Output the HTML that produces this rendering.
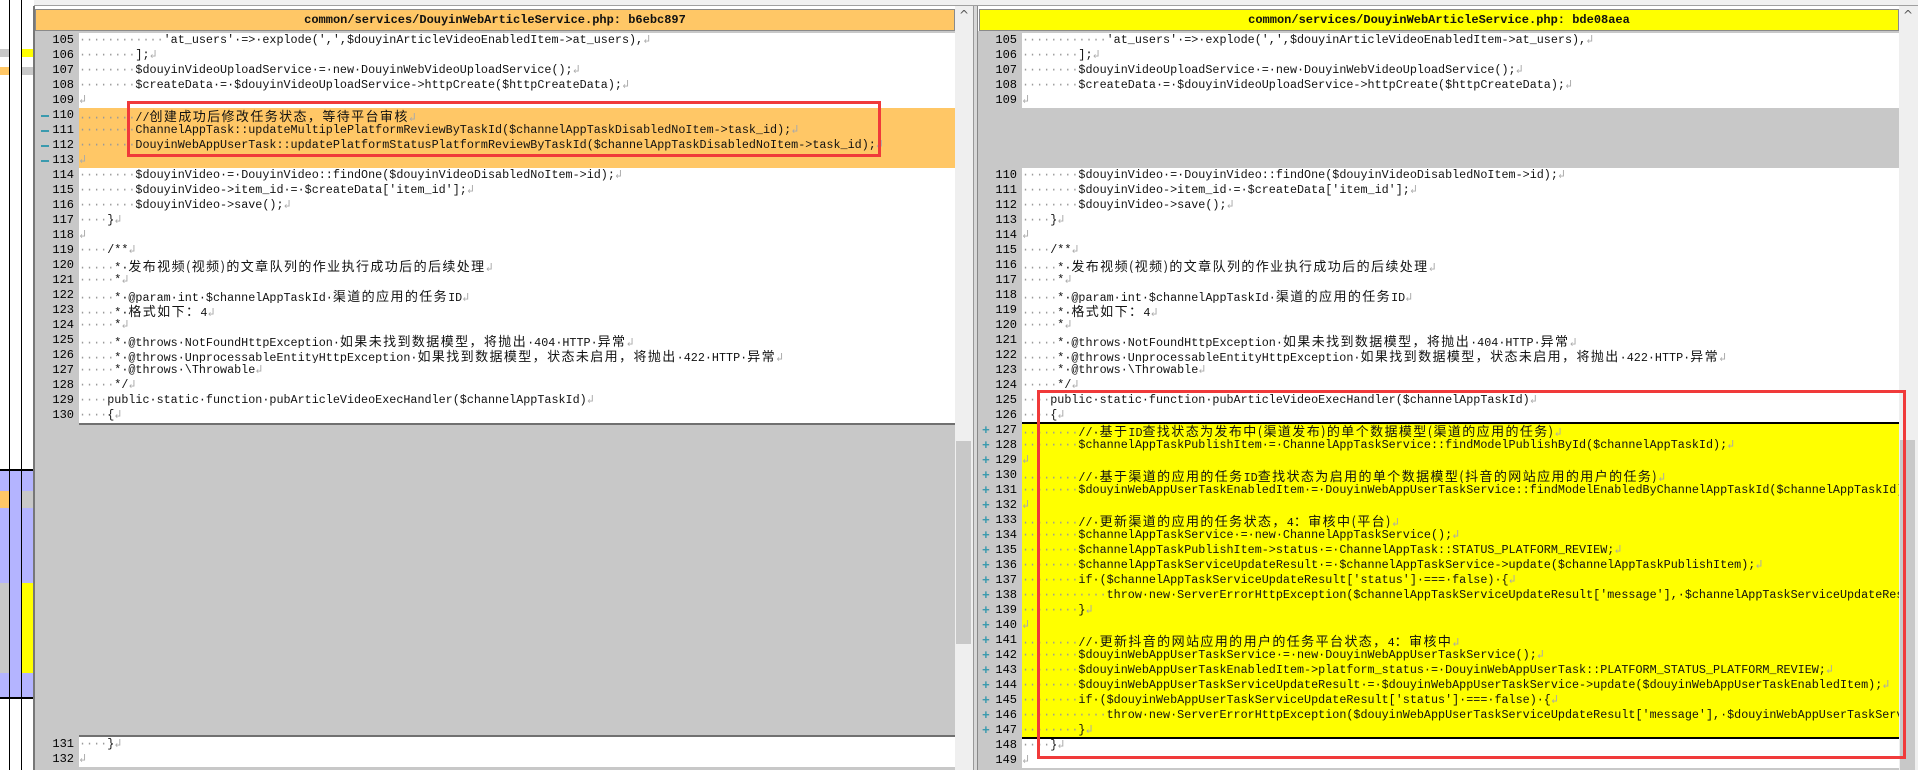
<!DOCTYPE html>
<html><head><meta charset="utf-8">
<style>
*{margin:0;padding:0;box-sizing:border-box}
body{width:1918px;height:770px;overflow:hidden;background:#fff;position:relative;font-family:"Liberation Mono","Noto Sans CJK SC",monospace;font-size:11.75px;color:#111}
.abs{position:absolute}
.pane{position:absolute;top:31px;bottom:0;overflow:hidden;background:#c8c8c8}
.r{height:15px;line-height:15px;white-space:pre;position:relative;display:flex}
.r b{font-weight:normal;width:44px;flex:none;text-align:right;padding-right:5px;background:#c8c8c8;color:#000;position:relative;font-size:12px}
.r span{flex:1;background:#fff;overflow:hidden}
.r.o span{background:#ffc766}
.r.y span{background:#ffff00}
.r.m b::before{content:"";position:absolute;left:6px;top:7px;width:8px;height:2px;background:#3a9aae}
.r.p b::before{content:"+";position:absolute;left:4px;top:0;color:#3a9aae;font-weight:bold;font-size:13px}
i{font-style:normal;color:#9a9a9a}
u{text-decoration:none;color:#aaa}
k{font-size:13px;letter-spacing:1.4px;font-family:"Noto Sans CJK SC","Liberation Mono",sans-serif}
.hdr{position:absolute;top:9px;height:22px;line-height:20px;text-align:center;font-weight:bold;font-size:12px;border:1px solid #8a8a8a}
</style></head><body>
<div class="abs" style="left:0;top:0;width:1918px;height:6px;background:#f0f0f0;border-bottom:1px solid #a0a0a0"></div>
<div class="abs" style="left:0;top:0;width:34px;height:770px;background:#fff"></div>
<div class="abs" style="left:0;top:49px;width:9px;height:8px;background:#c8c8c8"></div>
<div class="abs" style="left:21px;top:49px;width:12px;height:8px;background:#ffff00"></div>
<div class="abs" style="left:0;top:67px;width:9px;height:8px;background:#ffc766"></div>
<div class="abs" style="left:21px;top:67px;width:12px;height:8px;background:#c8c8c8"></div>
<div class="abs" style="left:0;top:470px;width:34px;height:228px;background:#b4b4ff"></div>
<div class="abs" style="left:0;top:491px;width:9px;height:17px;background:#ffc766"></div>
<div class="abs" style="left:21px;top:491px;width:12px;height:17px;background:#c8c8c8"></div>
<div class="abs" style="left:0;top:583px;width:9px;height:90px;background:#c8c8c8"></div>
<div class="abs" style="left:21px;top:583px;width:12px;height:90px;background:#ffff00"></div>
<div class="abs" style="left:0;top:469px;width:33px;height:2px;background:#000"></div>
<div class="abs" style="left:0;top:697px;width:33px;height:2px;background:#000"></div>
<div class="abs" style="left:9px;top:0;width:1px;height:770px;background:#000"></div>
<div class="abs" style="left:21px;top:0;width:1px;height:770px;background:#000"></div>
<div class="abs" style="left:33px;top:6px;width:2px;height:764px;background:#777"></div>

<div class="hdr" style="left:35px;width:920px;background:#ffc766">common/services/DouyinWebArticleService.php: b6ebc897</div>

<div class="pane" style="left:35px;width:920px;padding-top:2px">
<div class="r"><b>105</b><span><i>············</i>'at_users'·=>·explode(',',$douyinArticleVideoEnabledItem->at_users),<u>↲</u></span></div>
<div class="r"><b>106</b><span><i>········</i>];<u>↲</u></span></div>
<div class="r"><b>107</b><span><i>········</i>$douyinVideoUploadService·=·new·DouyinWebVideoUploadService();<u>↲</u></span></div>
<div class="r"><b>108</b><span><i>········</i>$createData·=·$douyinVideoUploadService->httpCreate($httpCreateData);<u>↲</u></span></div>
<div class="r"><b>109</b><span><u>↲</u></span></div>
<div class="r o m"><b>110</b><span><i>········</i>//<k>创建成功后修改任务状态，等待平台审核</k><u>↲</u></span></div>
<div class="r o m"><b>111</b><span><i>········</i>ChannelAppTask::updateMultiplePlatformReviewByTaskId($channelAppTaskDisabledNoItem->task_id);<u>↲</u></span></div>
<div class="r o m"><b>112</b><span><i>········</i>DouyinWebAppUserTask::updatePlatformStatusPlatformReviewByTaskId($channelAppTaskDisabledNoItem->task_id);<u>↲</u></span></div>
<div class="r o m"><b>113</b><span><u>↲</u></span></div>
<div class="r"><b>114</b><span><i>········</i>$douyinVideo·=·DouyinVideo::findOne($douyinVideoDisabledNoItem->id);<u>↲</u></span></div>
<div class="r"><b>115</b><span><i>········</i>$douyinVideo->item_id·=·$createData['item_id'];<u>↲</u></span></div>
<div class="r"><b>116</b><span><i>········</i>$douyinVideo->save();<u>↲</u></span></div>
<div class="r"><b>117</b><span><i>····</i>}<u>↲</u></span></div>
<div class="r"><b>118</b><span><u>↲</u></span></div>
<div class="r"><b>119</b><span><i>····</i>/**<u>↲</u></span></div>
<div class="r"><b>120</b><span><i>·····</i>*·<k>发布视频(视频)的文章队列的作业执行成功后的后续处理</k><u>↲</u></span></div>
<div class="r"><b>121</b><span><i>·····</i>*<u>↲</u></span></div>
<div class="r"><b>122</b><span><i>·····</i>*·@param·int·$channelAppTaskId·<k>渠道的应用的任务</k>ID<u>↲</u></span></div>
<div class="r"><b>123</b><span><i>·····</i>*·<k>格式如下：</k>4<u>↲</u></span></div>
<div class="r"><b>124</b><span><i>·····</i>*<u>↲</u></span></div>
<div class="r"><b>125</b><span><i>·····</i>*·@throws·NotFoundHttpException·<k>如果未找到数据模型，将抛出</k>·404·HTTP·<k>异常</k><u>↲</u></span></div>
<div class="r"><b>126</b><span><i>·····</i>*·@throws·UnprocessableEntityHttpException·<k>如果找到数据模型，状态未启用，将抛出</k>·422·HTTP·<k>异常</k><u>↲</u></span></div>
<div class="r"><b>127</b><span><i>·····</i>*·@throws·\Throwable<u>↲</u></span></div>
<div class="r"><b>128</b><span><i>·····</i>*/<u>↲</u></span></div>
<div class="r"><b>129</b><span><i>····</i>public·static·function·pubArticleVideoExecHandler($channelAppTaskId)<u>↲</u></span></div>
<div class="r"><b>130</b><span><i>····</i>{<u>↲</u></span></div>
<div style="height:314px;margin-left:44px;background:#c8c8c8;border-top:2px solid #707070;border-bottom:2px solid #707070"></div>
<div class="r"><b>131</b><span><i>····</i>}<u>↲</u></span></div>
<div class="r"><b>132</b><span><u>↲</u></span></div>
</div>

<div class="abs" style="left:955px;top:6px;width:18px;height:764px;background:#efefef"></div>
<div class="abs" style="left:956px;top:441px;width:15px;height:203px;background:#c8c8c8"></div>
<div class="abs" style="left:957px;top:8px;width:14px;height:14px;color:#555;font-size:12px;text-align:center;line-height:14px;font-family:'DejaVu Sans',sans-serif">^</div>
<div class="abs" style="left:973px;top:6px;width:5px;height:764px;background:#d8d8d8;border-left:1px solid #999;border-right:1px solid #888"></div>

<div class="hdr" style="left:979px;width:920px;background:#ffff00">common/services/DouyinWebArticleService.php: bde08aea</div>

<div class="pane" style="left:978px;width:921px;padding-top:2px">
<div class="r"><b>105</b><span><i>············</i>'at_users'·=>·explode(',',$douyinArticleVideoEnabledItem->at_users),<u>↲</u></span></div>
<div class="r"><b>106</b><span><i>········</i>];<u>↲</u></span></div>
<div class="r"><b>107</b><span><i>········</i>$douyinVideoUploadService·=·new·DouyinWebVideoUploadService();<u>↲</u></span></div>
<div class="r"><b>108</b><span><i>········</i>$createData·=·$douyinVideoUploadService->httpCreate($httpCreateData);<u>↲</u></span></div>
<div class="r"><b>109</b><span><u>↲</u></span></div>
<div style="height:60px;background:#c8c8c8"></div>
<div class="r"><b>110</b><span><i>········</i>$douyinVideo·=·DouyinVideo::findOne($douyinVideoDisabledNoItem->id);<u>↲</u></span></div>
<div class="r"><b>111</b><span><i>········</i>$douyinVideo->item_id·=·$createData['item_id'];<u>↲</u></span></div>
<div class="r"><b>112</b><span><i>········</i>$douyinVideo->save();<u>↲</u></span></div>
<div class="r"><b>113</b><span><i>····</i>}<u>↲</u></span></div>
<div class="r"><b>114</b><span><u>↲</u></span></div>
<div class="r"><b>115</b><span><i>····</i>/**<u>↲</u></span></div>
<div class="r"><b>116</b><span><i>·····</i>*·<k>发布视频(视频)的文章队列的作业执行成功后的后续处理</k><u>↲</u></span></div>
<div class="r"><b>117</b><span><i>·····</i>*<u>↲</u></span></div>
<div class="r"><b>118</b><span><i>·····</i>*·@param·int·$channelAppTaskId·<k>渠道的应用的任务</k>ID<u>↲</u></span></div>
<div class="r"><b>119</b><span><i>·····</i>*·<k>格式如下：</k>4<u>↲</u></span></div>
<div class="r"><b>120</b><span><i>·····</i>*<u>↲</u></span></div>
<div class="r"><b>121</b><span><i>·····</i>*·@throws·NotFoundHttpException·<k>如果未找到数据模型，将抛出</k>·404·HTTP·<k>异常</k><u>↲</u></span></div>
<div class="r"><b>122</b><span><i>·····</i>*·@throws·UnprocessableEntityHttpException·<k>如果找到数据模型，状态未启用，将抛出</k>·422·HTTP·<k>异常</k><u>↲</u></span></div>
<div class="r"><b>123</b><span><i>·····</i>*·@throws·\Throwable<u>↲</u></span></div>
<div class="r"><b>124</b><span><i>·····</i>*/<u>↲</u></span></div>
<div class="r"><b>125</b><span><i>····</i>public·static·function·pubArticleVideoExecHandler($channelAppTaskId)<u>↲</u></span></div>
<div class="r"><b>126</b><span><i>····</i>{<u>↲</u></span></div>
<div class="r y p"><b>127</b><span><i>········</i>//·<k>基于</k>ID<k>查找状态为发布中(渠道发布)的单个数据模型(渠道的应用的任务)</k><u>↲</u></span></div>
<div class="r y p"><b>128</b><span><i>········</i>$channelAppTaskPublishItem·=·ChannelAppTaskService::findModelPublishById($channelAppTaskId);<u>↲</u></span></div>
<div class="r y p"><b>129</b><span><u>↲</u></span></div>
<div class="r y p"><b>130</b><span><i>········</i>//·<k>基于渠道的应用的任务</k>ID<k>查找状态为启用的单个数据模型(抖音的网站应用的用户的任务)</k><u>↲</u></span></div>
<div class="r y p"><b>131</b><span><i>········</i>$douyinWebAppUserTaskEnabledItem·=·DouyinWebAppUserTaskService::findModelEnabledByChannelAppTaskId($channelAppTaskId);<u>↲</u></span></div>
<div class="r y p"><b>132</b><span><u>↲</u></span></div>
<div class="r y p"><b>133</b><span><i>········</i>//·<k>更新渠道的应用的任务状态，</k>4<k>：审核中(平台)</k><u>↲</u></span></div>
<div class="r y p"><b>134</b><span><i>········</i>$channelAppTaskService·=·new·ChannelAppTaskService();<u>↲</u></span></div>
<div class="r y p"><b>135</b><span><i>········</i>$channelAppTaskPublishItem->status·=·ChannelAppTask::STATUS_PLATFORM_REVIEW;<u>↲</u></span></div>
<div class="r y p"><b>136</b><span><i>········</i>$channelAppTaskServiceUpdateResult·=·$channelAppTaskService->update($channelAppTaskPublishItem);<u>↲</u></span></div>
<div class="r y p"><b>137</b><span><i>········</i>if·($channelAppTaskServiceUpdateResult['status']·===·false)·{<u>↲</u></span></div>
<div class="r y p"><b>138</b><span><i>············</i>throw·new·ServerErrorHttpException($channelAppTaskServiceUpdateResult['message'],·$channelAppTaskServiceUpdateResult['code']);<u>↲</u></span></div>
<div class="r y p"><b>139</b><span><i>········</i>}<u>↲</u></span></div>
<div class="r y p"><b>140</b><span><u>↲</u></span></div>
<div class="r y p"><b>141</b><span><i>········</i>//·<k>更新抖音的网站应用的用户的任务平台状态，</k>4<k>：审核中</k><u>↲</u></span></div>
<div class="r y p"><b>142</b><span><i>········</i>$douyinWebAppUserTaskService·=·new·DouyinWebAppUserTaskService();<u>↲</u></span></div>
<div class="r y p"><b>143</b><span><i>········</i>$douyinWebAppUserTaskEnabledItem->platform_status·=·DouyinWebAppUserTask::PLATFORM_STATUS_PLATFORM_REVIEW;<u>↲</u></span></div>
<div class="r y p"><b>144</b><span><i>········</i>$douyinWebAppUserTaskServiceUpdateResult·=·$douyinWebAppUserTaskService->update($douyinWebAppUserTaskEnabledItem);<u>↲</u></span></div>
<div class="r y p"><b>145</b><span><i>········</i>if·($douyinWebAppUserTaskServiceUpdateResult['status']·===·false)·{<u>↲</u></span></div>
<div class="r y p"><b>146</b><span><i>············</i>throw·new·ServerErrorHttpException($douyinWebAppUserTaskServiceUpdateResult['message'],·$douyinWebAppUserTaskServiceUpdateResult['code']);<u>↲</u></span></div>
<div class="r y p"><b>147</b><span><i>········</i>}<u>↲</u></span></div>
<div class="r"><b>148</b><span><i>····</i>}<u>↲</u></span></div>
<div class="r"><b>149</b><span><u>↲</u></span></div>
</div>
<div class="abs" style="left:1022px;top:422px;width:877px;height:2px;background:#000"></div>
<div class="abs" style="left:1022px;top:737px;width:877px;height:2px;background:#000"></div>

<div class="abs" style="left:1899px;top:6px;width:19px;height:764px;background:#efefef"></div>
<div class="abs" style="left:1900px;top:440px;width:15px;height:330px;background:#c8c8c8"></div>
<div class="abs" style="left:1901px;top:8px;width:14px;height:14px;color:#555;font-size:12px;text-align:center;line-height:14px;font-family:'DejaVu Sans',sans-serif">^</div>

<div class="abs" style="left:127px;top:101px;width:754px;height:56px;border:3px solid #f03a3a"></div>
<div class="abs" style="left:1037px;top:390px;width:869px;height:369px;border:3px solid #f03a3a"></div>
</body></html>
